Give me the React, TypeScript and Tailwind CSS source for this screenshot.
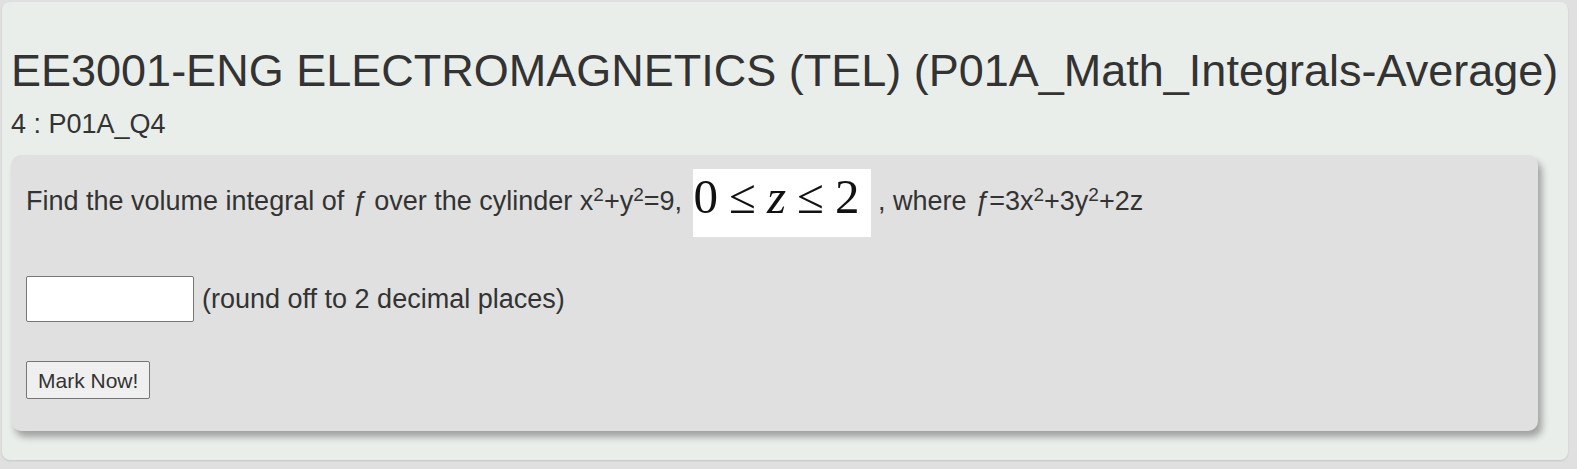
import React, { useState } from 'react';

const FONT = "font-['Liberation_Sans',Arial,sans-serif]";

// the "0 ≤ z ≤ 2" image sitting inline in the question
const RangeImage: React.FC = () => (
  <span className="inline-flex ml-[3px] w-[178px] h-[68px] align-middle bg-white pt-[3px] pl-[1px] font-['Liberation_Serif','Times_New_Roman',serif] text-[49px] leading-none text-[#111] whitespace-pre">
    <span>0</span>
    <span className="ml-[11px]">≤</span>
    <span className="ml-[11px] italic">z</span>
    <span className="ml-[11px]">≤</span>
    <span className="ml-[11px]">2</span>
  </span>
);

export default function App() {
  const [answer, setAnswer] = useState('');

  return (
    <div className={`min-h-screen bg-[#dfe0df] p-[2px] ${FONT} text-[#333]`}>
      <div className="w-[1566px] h-[458px] rounded-[8px] bg-[#eaeeeb] pl-[9px] pt-[43px] shadow-[0_1px_2px_rgba(0,0,0,0.12)]">
        <h1 className="text-[45px] leading-[52px] whitespace-nowrap">
          EE3001-ENG ELECTROMAGNETICS (TEL) (P01A_Math_Integrals-Average)
        </h1>
        <h2 className="mt-[12px] text-[27px] leading-[30px]">4 : P01A_Q4</h2>

        <div className="mt-[16px] w-[1527px] rounded-[10px] bg-[#dfe0df] px-[15px] pt-[14px] pb-[32px] shadow-[4px_6px_7px_rgba(0,0,0,0.32)]">
          <p className="text-[27px] leading-[30px] whitespace-nowrap">
            Find the volume integral of <i>ƒ</i> over the cylinder x
            <sup className="text-[19px]">2</sup>+y<sup className="text-[19px]">2</sup>=9, <RangeImage />
            {'  '}, where <i>ƒ</i>=3x<sup className="text-[19px]">2</sup>+3y
            <sup className="text-[19px]">2</sup>+2z
          </p>

          <div className="mt-[39px] flex items-center text-[27px] leading-[30px]">
            <input
              value={answer}
              onChange={(e) => setAnswer(e.target.value)}
              className="w-[168px] h-[46px] bg-white border border-[#767676] rounded-[2px] px-2 text-[16px] outline-none"
            />
            <span className="ml-[8px]">(round off to 2 decimal places)</span>
          </div>

          <button className="mt-[39px] h-[38px] px-[11px] bg-[#efefef] border border-[#767676] rounded-[2px] text-[21px] leading-none text-[#333]">
            Mark Now!
          </button>
        </div>
      </div>
    </div>
  );
}
